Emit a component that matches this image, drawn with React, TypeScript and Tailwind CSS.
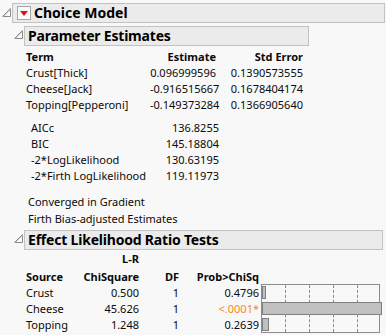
import React from "react";

const font = { fontFamily: '"Noto Sans", "Open Sans", sans-serif' };

function Tri() {
  return (
    <svg width="9" height="9" viewBox="0 0 9 9" className="block">
      <polygon points="8.5,0.5 8.5,8.5 0.5,8.5" fill="#fafafa" stroke="#8a8a8a" strokeWidth="1" />
      <polyline points="8.5,1.5 1.5,8.5" stroke="#c8c8c8" strokeWidth="1" fill="none" />
    </svg>
  );
}

function RedButton() {
  return (
    <div className="w-[14px] h-[14px] border border-[#a8a8a8] bg-[#fbfbfb] flex items-center justify-center">
      <svg width="8" height="5" viewBox="0 0 8 5" className="block">
        <polygon points="0,0 8,0 4,5" fill="#e0101a" />
      </svg>
    </div>
  );
}

function Header({ children, width }: { children: React.ReactNode; width: string }) {
  return (
    <div className={`h-[20px] border border-[#c2c2c2] bg-[#ebebeb] flex items-center ${width}`}>
      {children}
    </div>
  );
}

const params = [
  ["Crust[Thick]", "0.096999596", "0.1390573555"],
  ["Cheese[Jack]", "-0.916515667", "0.1678404174"],
  ["Topping[Pepperoni]", "-0.149373284", "0.1366905640"],
];

const stats = [
  ["AICc", "136.8255"],
  ["BIC", "145.18804"],
  ["-2*LogLikelihood", "130.63195"],
  ["-2*Firth LogLikelihood", "119.11973"],
];

const effects = [
  { s: "Crust", c: "0.500", df: "1", p: "0.4796", sig: false, w: 4 },
  { s: "Cheese", c: "45.626", df: "1", p: "<.0001*", sig: true, w: 120 },
  { s: "Topping", c: "1.248", df: "1", p: "0.2639", sig: false, w: 7 },
];

export default function App() {
  return (
    <div className="w-[386px] h-[335px] bg-[#f8f8f8] text-[11px] text-[#0a0a0a] overflow-hidden" style={font}>
      {/* Level 1 header */}
      <div className="flex items-start pt-[3px]">
        <div className="w-[12px] pl-[2px] pt-[5px]">
          <Tri />
        </div>
        <Header width="w-[373px]">
          <div className="ml-[4px]">
            <RedButton />
          </div>
          <span className="ml-[3px] text-[14px] font-bold text-black leading-none">Choice Model</span>
        </Header>
      </div>

      {/* Level 2: Parameter Estimates */}
      <div className="flex items-start pt-[3px] pl-[12px]">
        <div className="w-[12px] pl-[2px] pt-[4px]">
          <Tri />
        </div>
        <Header width="w-[285px]">
          <span className="ml-[3px] text-[14px] font-bold text-black leading-none tracking-[-0.2px]">Parameter Estimates</span>
        </Header>
      </div>

      <div className="pl-[26px] pt-[3px]">
        <div className="grid grid-cols-[124px_66px_87px] leading-[16px]">
          <div className="font-bold">Term</div>
          <div className="font-bold text-right">Estimate</div>
          <div className="font-bold text-right">Std Error</div>
          {params.map((r) => (
            <React.Fragment key={r[0]}>
              <div>{r[0]}</div>
              <div className="text-right">{r[1]}</div>
              <div className="text-right">{r[2]}</div>
            </React.Fragment>
          ))}
        </div>

        <div className="grid grid-cols-[129px_59px] leading-[16px] pl-[5px] pt-[7px]">
          {stats.map((r) => (
            <React.Fragment key={r[0]}>
              <div>{r[0]}</div>
              <div className="text-right">{r[1]}</div>
            </React.Fragment>
          ))}
        </div>

        <div className="pl-[2px] pt-[9px] leading-[17px]">
          <div>Converged in Gradient</div>
          <div>Firth Bias-adjusted Estimates</div>
        </div>
      </div>

      {/* Level 2: Effect Likelihood Ratio Tests */}
      <div className="flex items-start pt-[3px] pl-[12px]">
        <div className="w-[12px] pl-[2px] pt-[4px]">
          <Tri />
        </div>
        <Header width="w-[359px]">
          <span className="ml-[3px] text-[14px] font-bold text-black leading-none tracking-[-0.2px]">Effect Likelihood Ratio Tests</span>
        </Header>
      </div>

      <div className="pl-[26px] pt-[1px]">
        <div className="grid grid-cols-[54px_59px_40px_80px_121px] leading-[16px]">
          <div />
          <div className="font-bold text-right">L-R</div>
          <div />
          <div />
          <div />
          <div className="font-bold pt-[2px]">Source</div>
          <div className="font-bold text-right pt-[2px]">ChiSquare</div>
          <div className="font-bold text-right pt-[2px]">DF</div>
          <div className="font-bold text-right pt-[2px]">Prob&gt;ChiSq</div>
          <div />
          {effects.map((e, i) => (
            <React.Fragment key={e.s}>
              <div>{e.s}</div>
              <div className="text-right">{e.c}</div>
              <div className="text-right">{e.df}</div>
              <div className={`text-right ${e.sig ? "text-[#f28a1e]" : ""}`}>{e.p}</div>
              {i === 0 ? (
                <div className="row-span-3 ml-[2px] mt-[-1px] h-[49px] border border-[#8c8c8c] relative">
                  {[23, 47, 71, 95].map((x) => (
                    <div
                      key={x}
                      className="absolute top-0 bottom-0 border-l border-dashed border-[#8c8c8c]"
                      style={{ left: x }}
                    />
                  ))}
                  <div className="absolute inset-0 flex flex-col justify-between py-[1px]">
                    {effects.map((b) => (
                      <div
                        key={b.s}
                        className="h-[13px] bg-[#c0c0c0] border border-[#808080]"
                        style={{ width: b.w }}
                      />
                    ))}
                  </div>
                </div>
              ) : null}
            </React.Fragment>
          ))}
        </div>
      </div>
    </div>
  );
}
